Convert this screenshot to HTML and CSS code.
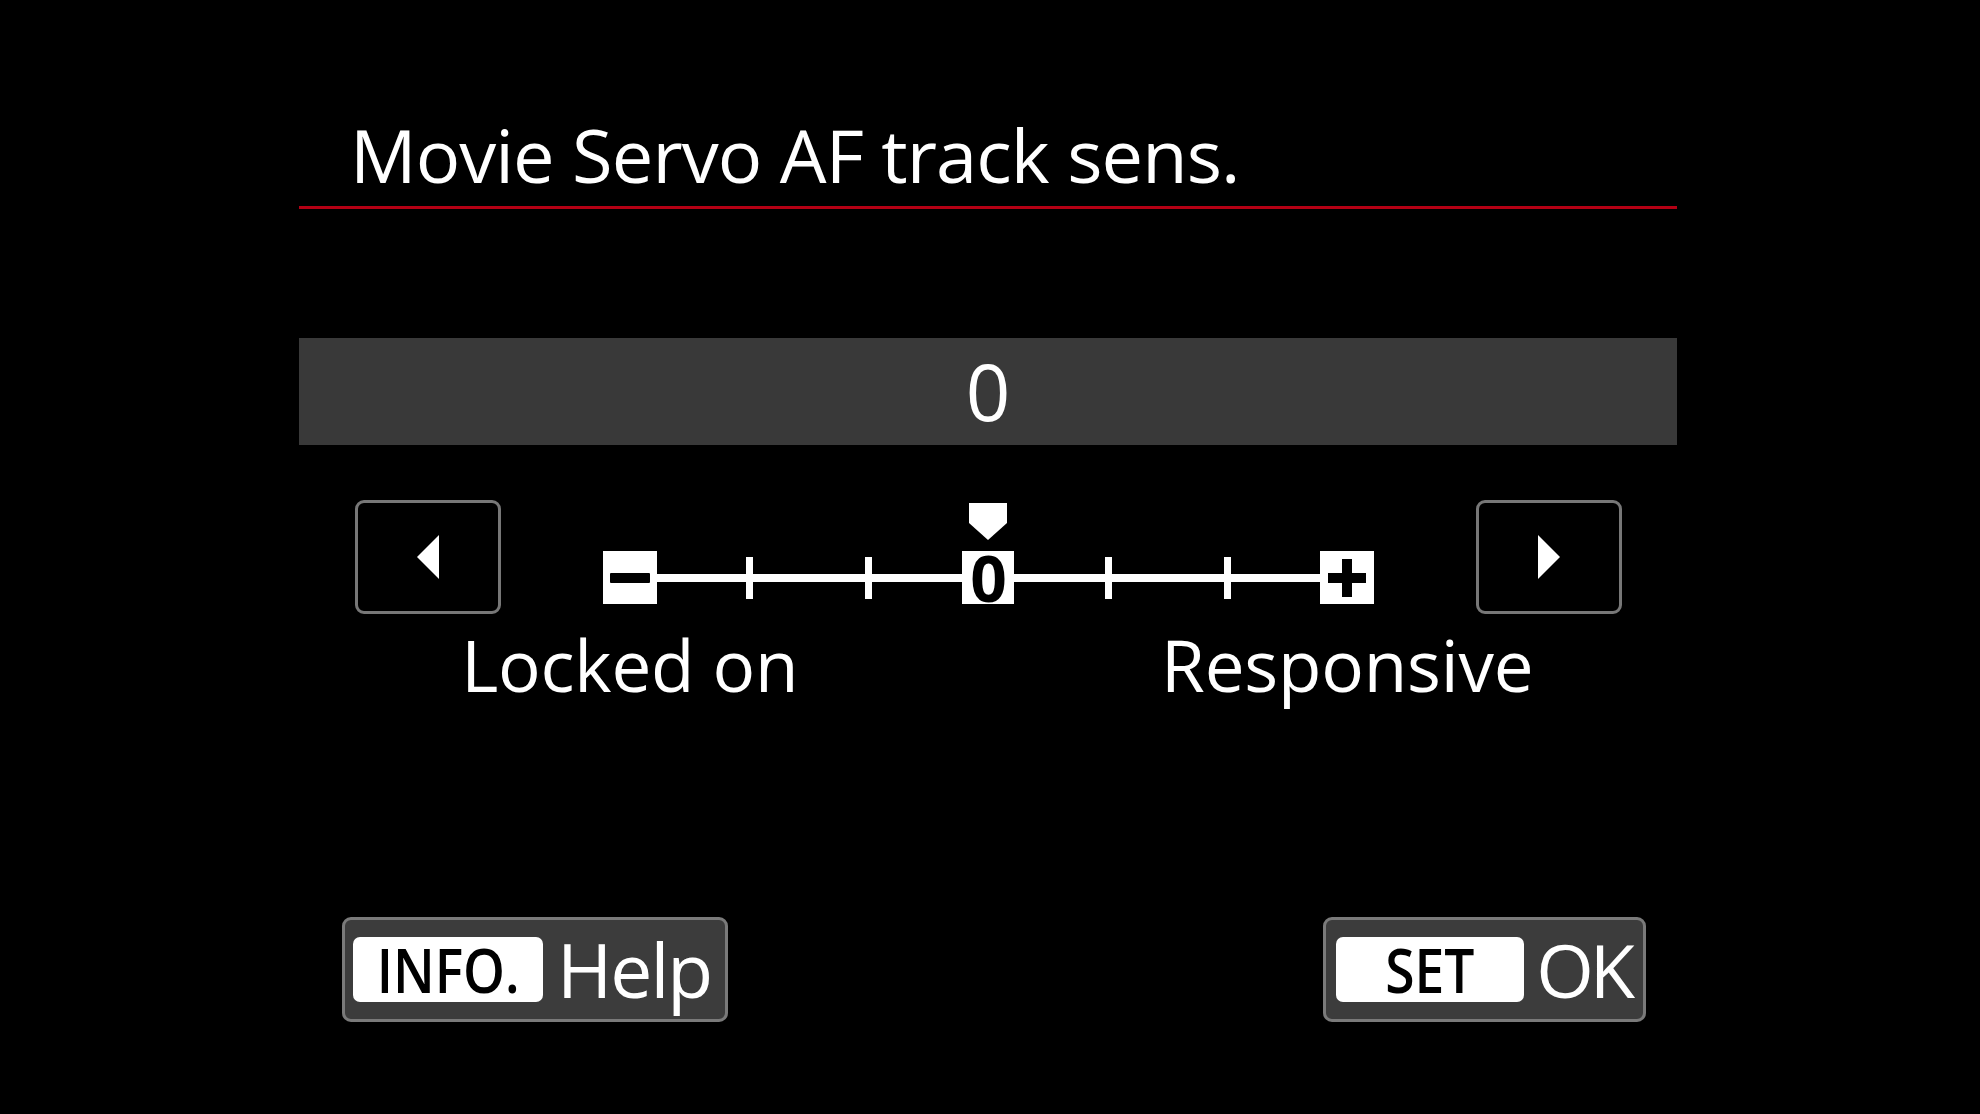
FILE: index.html
```html
<!DOCTYPE html>
<html lang="en">
<head>
<meta charset="utf-8">
<title>Movie Servo AF track sens.</title>
<link rel="stylesheet" href="styles.css">
</head>
<body>
<div class="screen">
  <h1 class="title">Movie Servo AF track sens.</h1>
  <div class="value-bar">0</div>
  <div class="adjust">
    <div class="arrow-btn">
      <svg width="22" height="44" viewBox="0 0 22 44"><polygon points="22,0 22,44 0,22" fill="#fff"/></svg>
    </div>
    <div class="scale">
      <div class="scale-grid marker-row">
        <div class="cell"></div><div class="cell"></div><div class="cell"></div>
        <div class="cell">
          <svg width="38" height="37" viewBox="0 0 38 37"><polygon points="0,0 38,0 38,20 19,37 0,20" fill="#fff"/></svg>
        </div>
        <div class="cell"></div><div class="cell"></div><div class="cell"></div>
      </div>
      <div class="scale-grid track">
        <div class="cell"><div class="step-box">
          <svg width="40" height="10" viewBox="0 0 40 10"><rect x="0" y="0" width="40" height="10" rx="1" fill="#000"/></svg>
        </div></div>
        <div class="cell"><div class="tick"></div></div>
        <div class="cell"><div class="tick"></div></div>
        <div class="cell"><div class="step-box zero">0</div></div>
        <div class="cell"><div class="tick"></div></div>
        <div class="cell"><div class="tick"></div></div>
        <div class="cell"><div class="step-box">
          <svg width="38" height="38" viewBox="0 0 38 38"><rect x="0" y="14" width="38" height="10" fill="#000"/><rect x="14" y="0" width="10" height="38" fill="#000"/></svg>
        </div></div>
      </div>
      <div class="scale-grid labels">
        <div class="label"><span>Locked on</span></div>
        <div class="label label-end"><span>Responsive</span></div>
      </div>
    </div>
    <div class="arrow-btn">
      <svg width="22" height="44" viewBox="0 0 22 44"><polygon points="0,0 0,44 22,22" fill="#fff"/></svg>
    </div>
  </div>
  <div class="footer">
    <div class="key-btn">
      <div class="key key-info"><span>INFO.</span></div>
      <span class="key-label">Help</span>
    </div>
    <div class="key-btn key-btn-set">
      <div class="key key-set"><span>SET</span></div>
      <span class="key-label key-label-ok">OK</span>
    </div>
  </div>
</div>
</body>
</html>
```

FILE: styles.css
```css
html, body {
  margin: 0;
  padding: 0;
  background: #000;
}

body {
  width: 1980px;
  height: 1114px;
  overflow: hidden;
  font-family: "Open Sans", "Noto Sans", sans-serif;
  color: #fff;
}

.screen {
  width: 1378px;
  margin-left: 299px;
  padding-top: 110px;
}

.title {
  margin: 0;
  padding: 0 0 6px 51px;
  font-size: 74px;
  font-weight: 400;
  line-height: 90px;
  letter-spacing: -0.9px;
  border-bottom: 3px solid #b40014;
}

.value-bar {
  margin-top: 129px;
  height: 107px;
  background: #393939;
  display: flex;
  justify-content: center;
  align-items: center;
  font-size: 78px;
  line-height: 107px;
}

.adjust {
  margin-top: 55px;
  display: flex;
  align-items: flex-start;
  gap: 69px;
  padding: 0 55px 0 56px;
}

.arrow-btn {
  box-sizing: border-box;
  width: 146px;
  height: 114px;
  border: 3px solid #777;
  border-radius: 9px;
  display: flex;
  justify-content: center;
  align-items: center;
  flex: none;
}

.scale {
  width: 837px;
  flex: none;
  margin-top: 3px;
}

.scale-grid {
  display: grid;
  grid-template-columns: repeat(7, minmax(0, 1fr));
}

.cell {
  display: flex;
  justify-content: center;
  align-items: center;
}

.marker-row {
  height: 37px;
}

.marker-row svg {
  display: block;
}

.track {
  margin-top: 11px;
  height: 53px;
  background: linear-gradient(#fff, #fff) center / calc(100% * 6 / 7) 8px no-repeat;
}

.step-box {
  width: 54px;
  height: 53px;
  background: #fff;
  display: flex;
  justify-content: center;
  align-items: center;
}

.step-box svg {
  display: block;
}

.step-box.zero {
  width: 52px;
  color: #000;
  font-size: 64px;
  font-weight: 700;
  line-height: 53px;
}

.tick {
  width: 7px;
  height: 42px;
  background: #fff;
}

.labels {
  margin-top: 21px;
  height: 80px;
}

.label {
  display: flex;
  justify-content: center;
  white-space: nowrap;
  font-size: 71px;
  line-height: 80px;
  letter-spacing: -0.2px;
}

.label span {
  flex: none;
}

.label-end {
  grid-column: 7;
}

.footer {
  margin-top: 212px;
  display: flex;
  justify-content: space-between;
  padding: 0 31px 0 43px;
}

.key-btn {
  display: flex;
  align-items: center;
  gap: 14px;
  border: 3px solid #7a7a7a;
  border-radius: 9px;
  background: #3c3c3c;
  padding: 17px 14px 17px 8px;
}

.key-btn-set {
  padding-left: 10px;
  padding-right: 12px;
  gap: 12px;
}

.key {
  height: 65px;
  background: #fff;
  border-radius: 7px;
  display: flex;
  justify-content: center;
  align-items: center;
  color: #000;
  font-size: 62px;
  font-weight: 600;
  line-height: 65px;
}

.key span {
  display: inline-block;
  transform: scaleX(0.86);
}

.key-info {
  width: 190px;
}

.key-set {
  width: 188px;
}

.key-label {
  font-size: 75px;
  line-height: 65px;
  letter-spacing: -2px;
}

.key-label-ok {
  font-size: 74px;
  letter-spacing: -4px;
}
```
